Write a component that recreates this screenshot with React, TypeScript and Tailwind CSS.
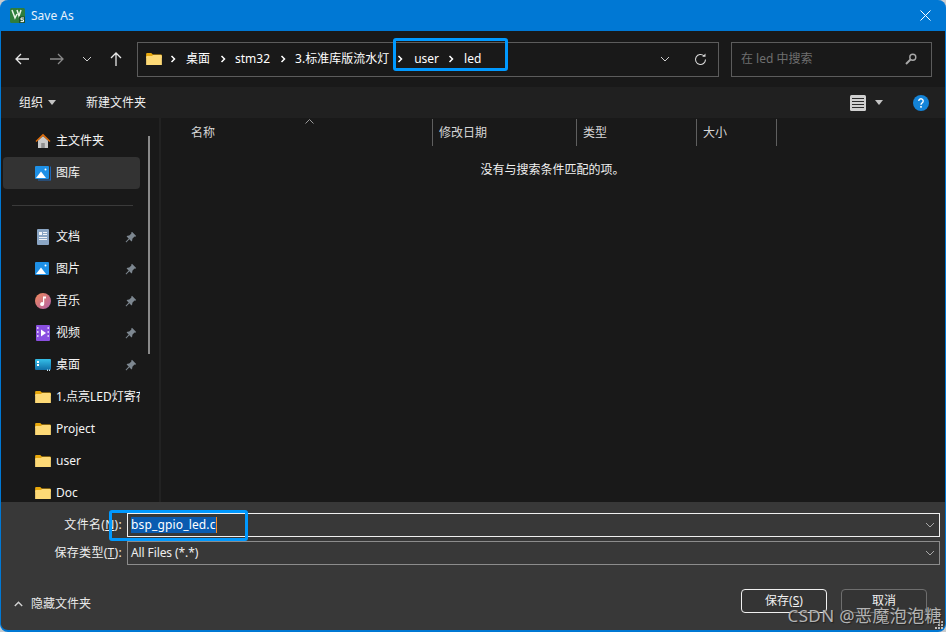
import React from "react";

const Folder = ({ w = 16 }: { w?: number }) => (
  <svg width={w} height={w * 0.8} viewBox="0 0 16 13" className="shrink-0">
    <path d="M0 1.200C0 .5.5 0 1.200 0h4l1.600 1.600h8c.7 0 1.200.5 1.200 1.200V5H0z" fill="#e8a80c" />
    <path d="M0 11.800V4.200C0 3.600.5 3 1.200 3h4.600l1.400-1h7.600c.7 0 1.200.5 1.200 1.200v8.600c0 .7-.5 1.200-1.200 1.200H1.200C.5 13 0 12.500 0 11.800z" fill="#fdd976" />
  </svg>
);

const Pin = () => (
  <svg width="12" height="12" viewBox="0 0 12 12" className="shrink-0">
    <path d="M7 .8l4.200 4.200-1 .8-.7-.2L7.400 7.800l-.2 1.800-.8.8L4.400 8.300 1.200 11.400.6 10.800l3.100-3.200L1.600 5.500l.8-.8 1.800-.2L6.400 2.400l-.2-.7z" fill="#7d8790" />
  </svg>
);

const Home = () => (
  <svg width="16" height="16" viewBox="0 0 16 16">
    <path d="M3 7.500L8 3l5 4.500V15H3z" fill="#c9c9c9" />
    <rect x="6.200" y="10" width="3.600" height="5" fill="#8f8f8f" />
    <path d="M.5 8L8 .8 15.500 8l-1 1L8 3 1.500 9z" fill="#dc6c0c" />
  </svg>
);

const Picture = ({ stack }: { stack?: boolean }) => (
  <svg width="16" height="16" viewBox="0 0 16 16">
    {stack && <path d="M15 1.500h1V15.500H3v-1h12z" fill="#2068b8" />}
    <rect x="0" y="1" width="14" height="13" rx="1" fill="#1e90e6" />
    <circle cx="10.500" cy="4.500" r="1" fill="#fff" />
    <path d="M1 13l5-6.500L11 13z" fill="#fff" />
  </svg>
);

const Doc = () => (
  <svg width="16" height="16" viewBox="0 0 16 16">
    <rect x="2" y="0" width="12" height="16" rx="1" fill="#8aa5c4" />
    <path d="M4 3h3v3H4zM8 3h4v1H8zM8 5h4v1H8zM4 8h8v1H4zM4 10h8v1H4z" fill="#f2f5f9" />
  </svg>
);

const Music = () => (
  <svg width="16" height="16" viewBox="0 0 16 16">
    <defs>
      <linearGradient id="mg" x1="0" y1="0" x2="1" y2="1">
        <stop offset="0" stopColor="#f0895a" />
        <stop offset="1" stopColor="#b060a8" />
      </linearGradient>
    </defs>
    <circle cx="8" cy="8" r="8" fill="url(#mg)" />
    <path d="M8 3.500h3v2H9.200V11a2 2 0 1 1-1.200-1.800z" fill="#fff" />
  </svg>
);

const Video = () => (
  <svg width="16" height="16" viewBox="0 0 16 16">
    <rect x="1" y="0" width="14" height="16" rx="1" fill="#8a4fe0" />
    <path d="M2 2h1.500v2H2zM2 6h1.500v2H2zM2 10h1.500v2H2zM12.500 2H14v2h-1.500zM12.500 6H14v2h-1.500zM12.500 10H14v2h-1.500z" fill="#d9c5f8" />
    <path d="M6 4.500l5 3.500-5 3.500z" fill="#fff" />
  </svg>
);

const Desktop = () => (
  <svg width="16" height="12" viewBox="0 0 16 12">
    <defs>
      <linearGradient id="dg" x1="0" y1="0" x2="0" y2="1">
        <stop offset="0" stopColor="#35bfe8" />
        <stop offset="1" stopColor="#0f6fa8" />
      </linearGradient>
    </defs>
    <rect width="16" height="11" rx="1" fill="url(#dg)" />
    <path d="M2 2h2v2H2zM2 5h2v2H2z" fill="#fff" />
    <path d="M12 10.500h1V12h-1zM14 10.500h1V12h-1z" fill="#cfe9f5" />
  </svg>
);

const Crumb = () => (
  <svg width="6" height="8" viewBox="0 0 6 8" className="shrink-0">
    <path d="M1.500 1l3 3-3 3" fill="none" stroke="#fff" strokeWidth="1.500" />
  </svg>
);

const Chevron = ({ color = "#cfcfcf" }: { color?: string }) => (
  <svg width="10" height="6" viewBox="0 0 10 6" className="shrink-0">
    <path d="M1 1l4 4 4-4" fill="none" stroke={color} strokeWidth="1" />
  </svg>
);

const Caret = () => (
  <svg width="8" height="5" viewBox="0 0 8 5" className="shrink-0">
    <path d="M0 0h8L4 5z" fill="#c4c4c4" />
  </svg>
);

const items = [
  { icon: <Doc />, label: "文档", pin: true },
  { icon: <Picture />, label: "图片", pin: true },
  { icon: <Music />, label: "音乐", pin: true },
  { icon: <Video />, label: "视频", pin: true },
  { icon: <Desktop />, label: "桌面", pin: true },
  { icon: <Folder />, label: "1.点亮LED灯寄存器" },
  { icon: <Folder />, label: "Project" },
  { icon: <Folder />, label: "user" },
  { icon: <Folder />, label: "Doc" },
];

const Row = ({ icon, label, pin, active }: { icon: React.ReactNode; label: string; pin?: boolean; active?: boolean }) => (
  <div className={`flex h-8 w-[137px] shrink-0 items-center rounded-sm pl-[32px] ${active ? "bg-[#333333]" : ""}`}>
    <div className="flex w-[21px] shrink-0 items-center">{icon}</div>
    <span className="min-w-0 flex-1 overflow-hidden whitespace-nowrap text-[#f4f4f4]">{label}</span>
    {pin && <div className="ml-1 mr-[3px]"><Pin /></div>}
  </div>
);

const columns: [string, number][] = [
  ["名称", 262],
  ["修改日期", 144],
  ["类型", 120],
  ["大小", 80],
];

export default function App() {
  return (
    <div
      className="relative h-[632px] w-[946px] overflow-hidden bg-[#c8ccd0] text-[12px] text-white"
      style={{ fontFamily: '"Noto Sans", "Noto Sans CJK SC", sans-serif' }}
    >
      <div className="flex h-full flex-col overflow-hidden rounded-lg border-x-[1px] border-b-[2px] border-[#0078d4] bg-[#0078d4]">
        {/* title bar */}
        <div className="flex h-[31px] shrink-0 items-center pl-[9px] pr-[14px]">
          <svg width="15" height="15" viewBox="0 0 15 15">
            <rect width="15" height="15" rx="1.500" fill="#2f7d3c" />
            <path d="M2 2l3 8 2-4M7 2l2 6 2-6" fill="none" stroke="#e8f4e6" strokeWidth="1.500" />
            <rect x="9" y="8.500" width="6" height="6.500" fill="#1d4f28" />
            <path d="M14 10h-3v1.800h2.500v1.800H10.500" fill="none" stroke="#fff" strokeWidth="1" />
          </svg>
          <span className="ml-[6px] text-[12px] text-[#e6f2fb]">Save As</span>
          <svg width="11" height="11" viewBox="0 0 11 11" className="ml-auto">
            <path d="M.5.5l10 10M10.500.5l-10 10" stroke="#fff" strokeWidth="1" />
          </svg>
        </div>

        {/* nav bar */}
        <div className="flex h-[56px] shrink-0 items-center bg-[#191919] pl-[14px] pr-[13px]">
          <svg width="14" height="12" viewBox="0 0 14 12"><path d="M6 1L1 6l5 5M1 6h13" fill="none" stroke="#e8e8e8" strokeWidth="1.300" /></svg>
          <svg width="14" height="12" viewBox="0 0 14 12" className="ml-[21px]"><path d="M8 1l5 5-5 5M13 6H0" fill="none" stroke="#8a8a8a" strokeWidth="1.300" /></svg>
          <div className="ml-[18px]"><Chevron /></div>
          <svg width="12" height="14" viewBox="0 0 12 14" className="ml-[18px]"><path d="M1 6l5-5 5 5M6 1v13" fill="none" stroke="#e8e8e8" strokeWidth="1.300" /></svg>
          <div className="ml-[15px] flex h-[35px] w-[582px] items-center border border-[#5c5c5c] pl-[8px] pr-[11px]">
            <Folder />
            <div className="ml-[8px]"><Crumb /></div>
            <span className="ml-[10px]">桌面</span>
            <div className="ml-[10px]"><Crumb /></div>
            <span className="ml-[9px]">stm32</span>
            <div className="ml-[10px]"><Crumb /></div>
            <span className="ml-[9px]">3.标准库版流水灯</span>
            <div className="ml-[8px]"><Crumb /></div>
            <span className="ml-[11px]">user</span>
            <div className="ml-[9px]"><Crumb /></div>
            <span className="ml-[10px]">led</span>
            <div className="ml-auto"><Chevron /></div>
            <svg width="13" height="13" viewBox="0 0 13 13" className="ml-[24px]">
              <path d="M11.500 6.500a5 5 0 1 1-1.500-3.600" fill="none" stroke="#d8d8d8" strokeWidth="1.100" />
              <path d="M11.500.5v3.300H8.200z" fill="#d8d8d8" />
            </svg>
          </div>
          <div className="ml-auto flex h-[35px] w-[201px] items-center justify-between border border-[#5c5c5c] pl-[9px] pr-[14px]">
            <span className="text-[#6f6f6f]">在 led 中搜索</span>
            <svg width="12" height="12" viewBox="0 0 12 12">
              <circle cx="7.800" cy="4.200" r="3" fill="none" stroke="#a8a8a8" strokeWidth="1.400" />
              <path d="M5.500 6.500L1 11" stroke="#a8a8a8" strokeWidth="2" />
            </svg>
          </div>
        </div>

        {/* toolbar */}
        <div className="flex h-[31px] shrink-0 items-center bg-[#202020] pl-[18px] pr-[16px] text-[#f0f0f0]">
          <span>组织</span>
          <div className="ml-[5px]"><Caret /></div>
          <span className="ml-[30px]">新建文件夹</span>
          <svg width="16" height="16" viewBox="0 0 16 16" className="ml-auto">
            <rect width="16" height="16" rx="1.500" fill="#d0d0d0" />
            <path d="M2 3.500h12M2 6.500h12M2 9.500h12M2 12.500h12" stroke="#2c2c2c" strokeWidth="1" />
          </svg>
          <div className="ml-[9px]"><Caret /></div>
          <svg width="16" height="16" viewBox="0 0 16 16" className="ml-[30px]">
            <circle cx="8" cy="8" r="8" fill="#1484d8" />
            <path d="M5.800 6a2.200 2.200 0 1 1 3.400 1.800C8.400 8.400 8 8.800 8 9.800" fill="none" stroke="#fff" strokeWidth="1.400" />
            <rect x="7.200" y="11" width="1.600" height="1.700" fill="#fff" />
          </svg>
        </div>

        {/* main */}
        <div className="flex min-h-0 flex-1 bg-[#191919]">
          <div className="relative flex w-[158px] shrink-0 flex-col overflow-hidden pt-[7px] pl-[2px]">
            <Row icon={<Home />} label="主文件夹" />
            <Row icon={<Picture stack />} label="图库" active />
            <div className="flex h-8 shrink-0 items-center pl-[9px]">
              <div className="h-px w-[121px] bg-[#3a3a3a]" />
            </div>
            {items.map((it) => (
              <Row key={it.label} icon={it.icon} label={it.label} pin={it.pin} />
            ))}
            <div className="absolute left-[147px] top-[18px] h-[218px] w-[2px] bg-[#8a8a8a]" />
          </div>
          <div className="w-[2px] shrink-0 bg-[#222222]" />
          <div className="relative min-w-0 flex-1">
            <div className="flex h-[28px] pt-px pl-[10px]">
              {columns.map(([c, w], i) => (
                <div
                  key={c}
                  style={{ width: w }}
                  className={`flex h-[27px] items-center border-r border-[#5f5f5f] text-[#d6d6d6] ${i === 0 ? "pl-[20px]" : "pl-[6px]"}`}
                >
                  {c}
                </div>
              ))}
            </div>
            <svg width="9" height="5" viewBox="0 0 9 5" className="absolute left-[144px] top-[1px]">
              <path d="M.5 4.500l4-4 4 4" fill="none" stroke="#9a9a9a" strokeWidth="1" />
            </svg>
            <div className="mt-[15px] w-[783px] text-center text-[#f0f0f0]">没有与搜索条件匹配的项。</div>
          </div>
        </div>

        {/* bottom */}
        <div className="flex h-[128px] shrink-0 flex-col bg-[#383838]">
          <div className="mt-[11px] flex h-[24px] items-center">
            <div className="w-[125px] shrink-0 pr-[4px] text-right tracking-[0.3px] text-[#eeeeee]">文件名(<span className="underline">N</span>):</div>
            <div className="ml-px flex h-[24px] w-[813px] items-center justify-between border border-[#f0f0f0] pl-[3px] pr-[4px]">
              <span className="border-r border-[#ff8a1e] bg-[#0a5bb0] leading-[16px] tracking-[0.15px] text-white">bsp_gpio_led.c</span>
              <Chevron color="#a8a8a8" />
            </div>
          </div>
          <div className="mt-[4px] flex h-[24px] items-center">
            <div className="w-[125px] shrink-0 pr-[4px] text-right tracking-[0.3px] text-[#eeeeee]">保存类型(<span className="underline">T</span>):</div>
            <div className="ml-px flex h-[24px] w-[813px] items-center justify-between border border-[#8c8c8c] pl-[3px] pr-[4px]">
              <span className="tracking-[-0.1px] text-[#eeeeee]">All Files (*.*)</span>
              <Chevron color="#a8a8a8" />
            </div>
          </div>
          <div className="mt-[24px] flex h-[24px] items-center pr-[18px]">
            <div className="ml-[13px] mt-[6px] flex items-center">
              <svg width="9" height="6" viewBox="0 0 9 6"><path d="M.8 5l3.700-3.700L8.200 5" fill="none" stroke="#d0d0d0" strokeWidth="1.400" /></svg>
              <span className="ml-[8px] text-[#e8e8e8]">隐藏文件夹</span>
            </div>
            <button className="ml-auto flex h-[24px] w-[86px] items-center justify-center rounded border border-[#f0f0f0] bg-[#343434] text-[#f0f0f0]">保存(<span className="underline">S</span>)</button>
            <button className="ml-[14px] flex h-[24px] w-[86px] items-center justify-center rounded border border-[#6e6e6e] bg-[#343434] text-[#f0f0f0]">取消</button>
          </div>
        </div>
      </div>

      {/* resize grip */}
      <svg width="8" height="8" viewBox="0 0 8 8" className="absolute bottom-[3px] right-[3px]">
        <path d="M6 0h2v2H6zM3 3h2v2H3zM6 3h2v2H6zM0 6h2v2H0zM3 6h2v2H3zM6 6h2v2H6z" fill="#bdbdbd" />
      </svg>

      {/* annotations */}
      <div className="absolute left-[393px] top-[38px] h-[33px] w-[115px] rounded-[3px] border-[3px] border-[#0099ff]" />
      <div className="absolute left-[109px] top-[510px] h-[31px] w-[139px] rounded-[3px] border-[3px] border-[#0099ff]" />

      {/* watermark */}
      <div className="absolute bottom-[6px] right-[4px] whitespace-nowrap text-[17px] leading-[20px] tracking-[0.4px] text-[#b4b4b4] [text-shadow:1px_1px_1px_#222]">
        CSDN @恶魔泡泡糖
      </div>
    </div>
  );
}
